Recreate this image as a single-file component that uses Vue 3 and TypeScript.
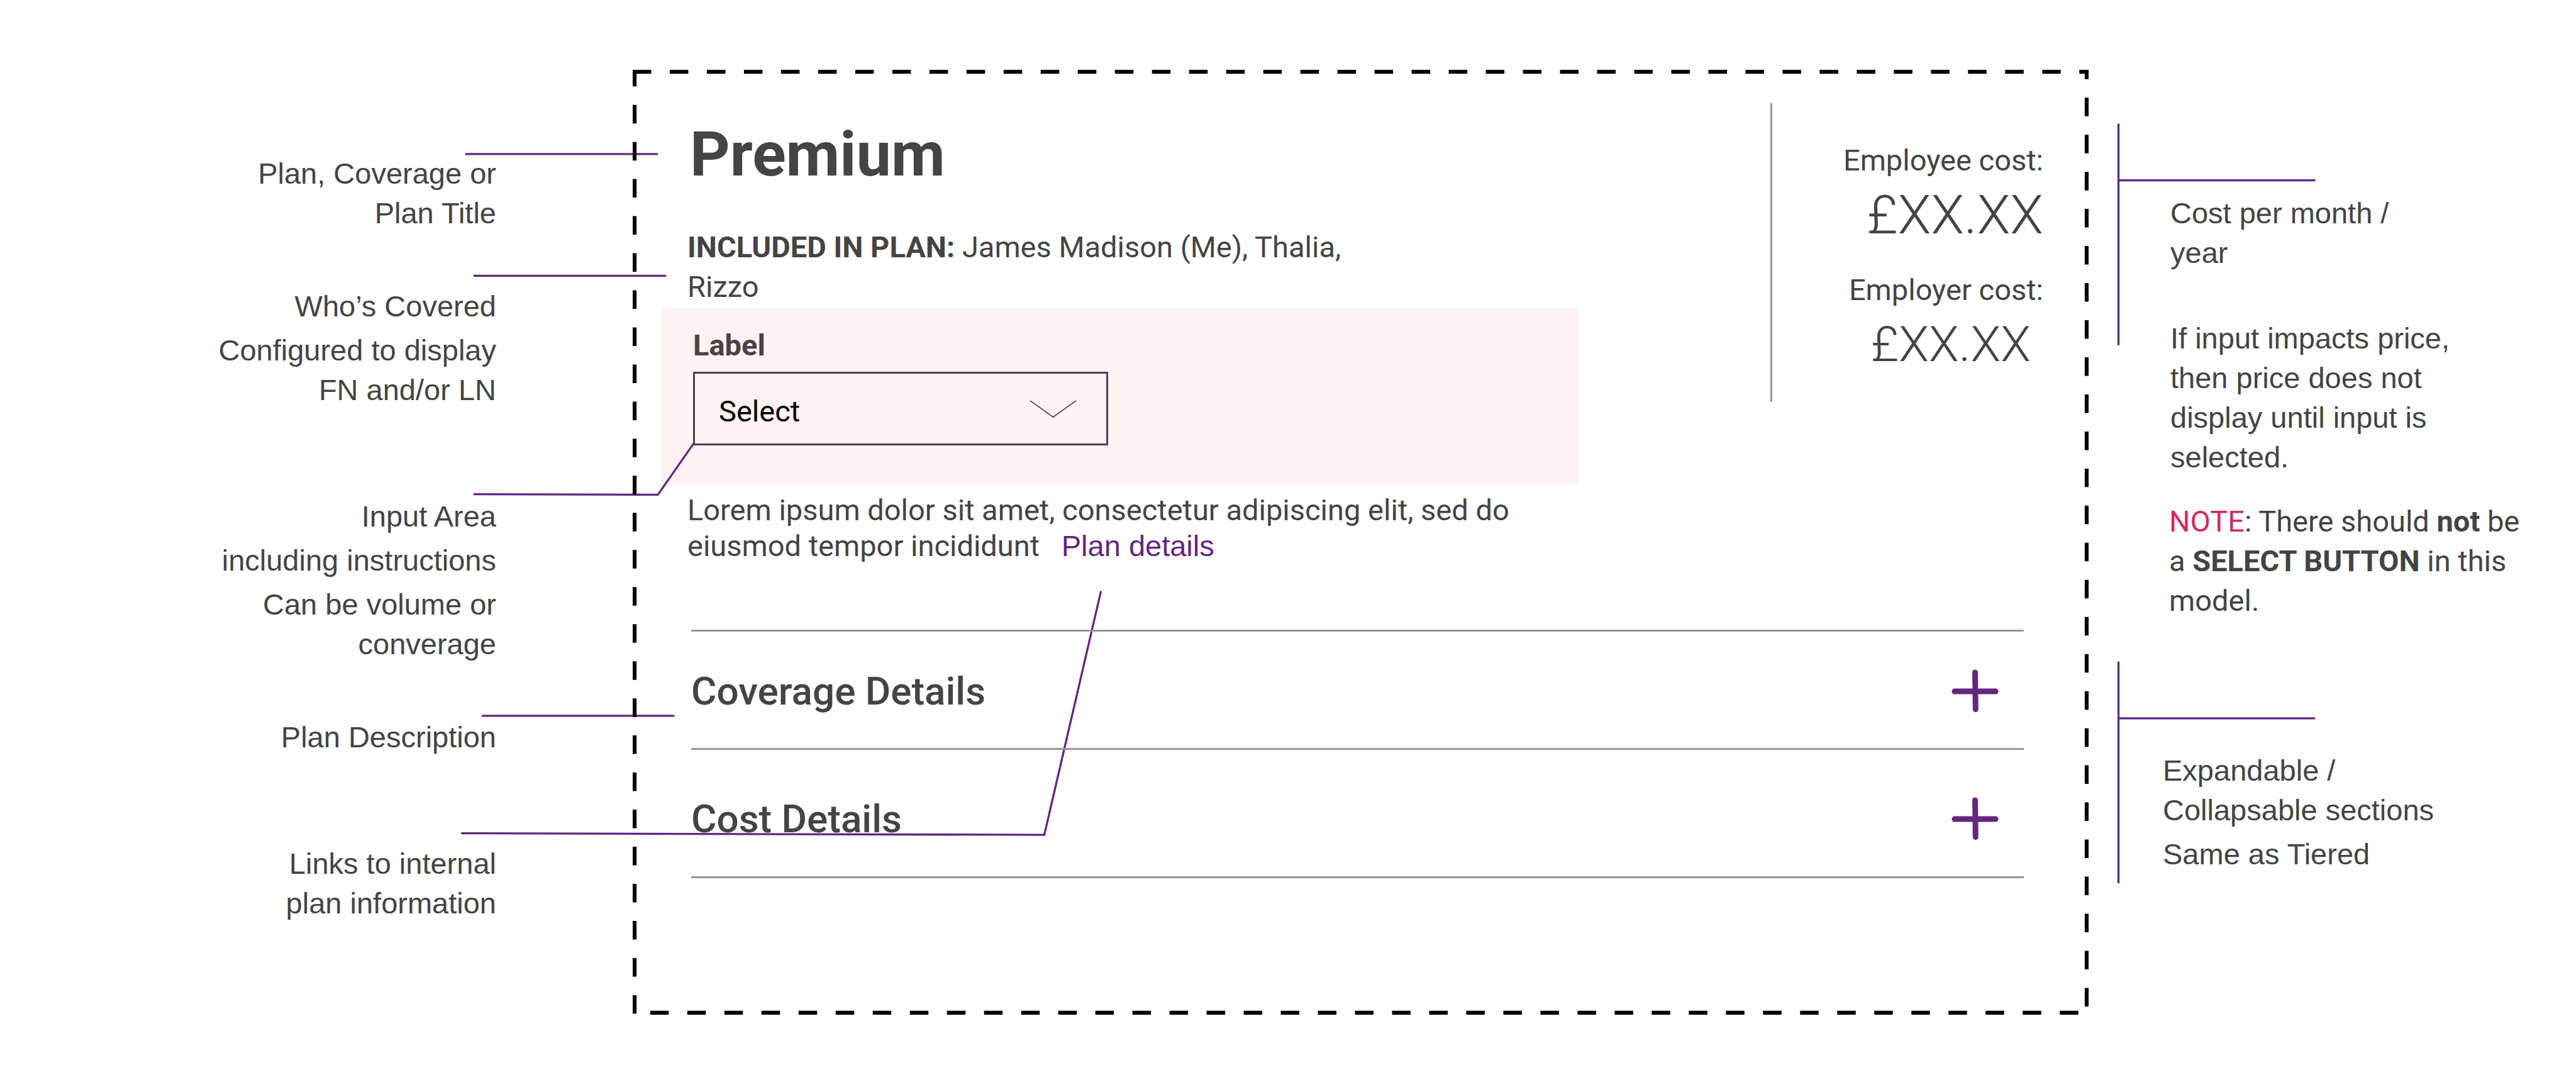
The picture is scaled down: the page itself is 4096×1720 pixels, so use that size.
<script setup lang="ts">
import { ref } from 'vue'

interface Cost {
  label: string
  amount: string
  small?: boolean
}

const costs: Cost[] = [
  { label: 'Employee cost:', amount: '£XX.XX' },
  { label: 'Employer cost:', amount: '£XX.XX', small: true },
]

const sections: string[] = ['Coverage Details', 'Cost Details']

const choice = ref('')
</script>

<template>
  <main class="page">
    <!-- Leader lines between the notes and the parts of the card -->
    <svg class="leaders" viewBox="0 0 5000 2100" aria-hidden="true">
      <path d="M903 299H1277" />
      <path d="M919 535H1293" />
      <path d="M919 959L1277 960L1346 861" />
      <path d="M935 1389H1309" />
      <path d="M895 1617L2027 1620L2137 1147" />
      <path d="M4112 240V670M4112 350H4494" />
      <path d="M4112 1284V1714M4112 1394H4494" />
    </svg>

    <aside class="notes notes-left">
      <section class="note">
        <p>Plan, Coverage or Plan Title</p>
      </section>
      <section class="note near">
        <p>Who’s Covered</p>
        <p>Configured to display FN and/or LN</p>
      </section>
      <section class="note far">
        <p>Input Area</p>
        <p>including instructions</p>
        <p>Can be volume or converage</p>
      </section>
      <section class="note near">
        <p>Plan Description</p>
      </section>
      <section class="note far">
        <p>Links to internal<br />plan information</p>
      </section>
    </aside>

    <article class="card">
      <svg class="frame" viewBox="0 0 2826 1834" preserveAspectRatio="none" aria-hidden="true">
        <path d="M0 0H2826V1834H0Z" />
      </svg>

      <div class="summary">
        <div class="plan">
          <h1>Premium</h1>
          <p class="members"><strong>INCLUDED IN PLAN:</strong> James Madison (Me), Thalia, Rizzo</p>

          <div class="input-area">
            <label for="plan-option">Label</label>
            <div class="picker">
              <select id="plan-option" v-model="choice">
                <option value="">Select</option>
              </select>
              <svg class="chevron" viewBox="0 0 92 34" aria-hidden="true">
                <path d="M1 1L46 33L91 1" />
              </svg>
            </div>
          </div>

          <p class="description">
            Lorem ipsum dolor sit amet, consectetur adipiscing elit, sed do eiusmod tempor incididunt
            <a href="#plan-details">Plan details</a>
          </p>
        </div>

        <dl class="costs">
          <div v-for="cost in costs" :key="cost.label" class="cost">
            <dt>{{ cost.label }}</dt>
            <dd :class="{ small: cost.small }">{{ cost.amount }}</dd>
          </div>
        </dl>
      </div>

      <div class="sections">
        <h2 v-for="title in sections" :key="title">
          <button type="button">
            <span>{{ title }}</span>
            <svg class="plus" viewBox="0 0 92 84" aria-hidden="true">
              <path d="M6 43H86M46 6L47 78" />
            </svg>
          </button>
        </h2>
      </div>
    </article>

    <aside class="notes notes-right">
      <section class="note">
        <p>Cost per month /<br />year</p>
      </section>
      <section class="note price">
        <p>If input impacts price, then price does not display until input is selected.</p>
      </section>
      <section class="note warning">
        <p><em>NOTE</em>: There should <strong>not</strong> be a <strong>SELECT BUTTON</strong> in this model.</p>
      </section>
      <section class="note expand">
        <p>Expandable / Collapsable sections</p>
        <p>Same as Tiered</p>
      </section>
    </aside>
  </main>
</template>

<style>
body {
  margin: 0;
  background: #fff;
}
</style>

<style scoped>
.page {
  --ink: #444;
  --purple: #64267e;
  --rule: #979797;
  position: relative;
  display: grid;
  grid-template-columns: minmax(0, 1006fr) minmax(0, 2315fr) minmax(0, 775fr);
  align-items: start;
  box-sizing: border-box;
  min-height: 100vh;
  padding: 111px 0 104px;
  color: var(--ink);
  font: 47px/63px Roboto, "Liberation Sans", sans-serif;
}

h1,
h2,
p,
dl,
dd {
  margin: 0;
}

.leaders {
  position: absolute;
  top: 0;
  left: 0;
  width: 100%;
  fill: none;
  stroke: var(--purple);
  stroke-width: 4;
}

.notes {
  position: relative;
  display: flex;
  flex-direction: column;
  font-family: "Liberation Sans", Arial, sans-serif;
}

.note {
  width: 456px;
}

.note p + p {
  margin-top: 7px;
}

.notes-left {
  align-items: flex-end;
  padding: 133px 217px 0 0;
  text-align: right;
}

.near {
  margin-top: 85px;
}

.far {
  margin-top: 138px;
}

.notes-right {
  padding: 196px 0 0 130px;
}

.price {
  margin-top: 73px;
}

.warning {
  width: 576px;
  margin: 39px 0 0 -2px;
  font-family: Roboto, sans-serif;
}

.warning em {
  color: #d12a66;
  font-style: normal;
}

.expand {
  margin: 207px 0 0 -12px;
}

.card {
  position: relative;
  padding: 53px 0 217px;
}

.frame {
  position: absolute;
  inset: 0;
  width: 100%;
  height: 100%;
  fill: none;
  stroke: #000;
  stroke-width: 15;
  stroke-dasharray: 36;
  pointer-events: none;
}

.summary {
  display: flex;
  align-items: flex-start;
  justify-content: space-between;
  padding: 0 72px 0 87px;
}

.plan {
  padding-top: 23px;
}

h1 {
  padding-left: 4px;
  font-size: 99px;
  line-height: 116px;
}

.members {
  max-width: 1060px;
  margin-top: 58px;
}

.input-area {
  box-sizing: border-box;
  width: 1457px;
  margin: 3px 0 0 -42px;
  padding: 27px 51px 62px;
  background: rgb(240 69 98 / 7%);
}

label {
  display: block;
  color: #4c4143;
  font-weight: 700;
}

.picker {
  position: relative;
  width: 660px;
  margin-top: 11px;
}

select {
  display: block;
  box-sizing: border-box;
  width: 100%;
  height: 117px;
  padding: 8px 38px 0;
  appearance: none;
  border: 3px solid #4c4143;
  border-radius: 0;
  background: transparent;
  color: #000;
  font: inherit;
}

.chevron {
  position: absolute;
  top: 45px;
  right: 50px;
  width: 75px;
  fill: none;
  stroke: #4c4143;
  stroke-width: 2;
  pointer-events: none;
}

.description {
  max-width: 1340px;
  margin-top: 12px;
  line-height: 57px;
}

a {
  margin-left: 23px;
  color: var(--purple);
  font-family: "Liberation Sans", Arial, sans-serif;
  text-decoration: none;
}

.costs {
  display: flex;
  flex-direction: column;
  gap: 32px;
  box-sizing: border-box;
  width: 434px;
  padding: 59px 0 36px;
  border-left: 3px solid var(--rule);
  text-align: right;
}

dd {
  font-size: 86px;
  font-weight: 300;
  line-height: 111px;
}

dd.small {
  padding-right: 20px;
  font-size: 78px;
}

.sections {
  margin: 105px 103px 0 93px;
  border-top: 3px solid var(--rule);
}

h2 {
  border-bottom: 3px solid var(--rule);
  font-size: 62px;
  font-weight: 500;
}

button {
  display: flex;
  align-items: center;
  justify-content: space-between;
  width: 100%;
  padding: 38px 40px 34px 0;
  border: 0;
  background: transparent;
  color: inherit;
  font: inherit;
  line-height: 113px;
  text-align: left;
}

h2 + h2 button {
  padding-top: 53px;
  padding-bottom: 35px;
}

.plus {
  width: 75px;
  fill: none;
  stroke: var(--purple);
  stroke-width: 11;
  stroke-linecap: round;
}
</style>
